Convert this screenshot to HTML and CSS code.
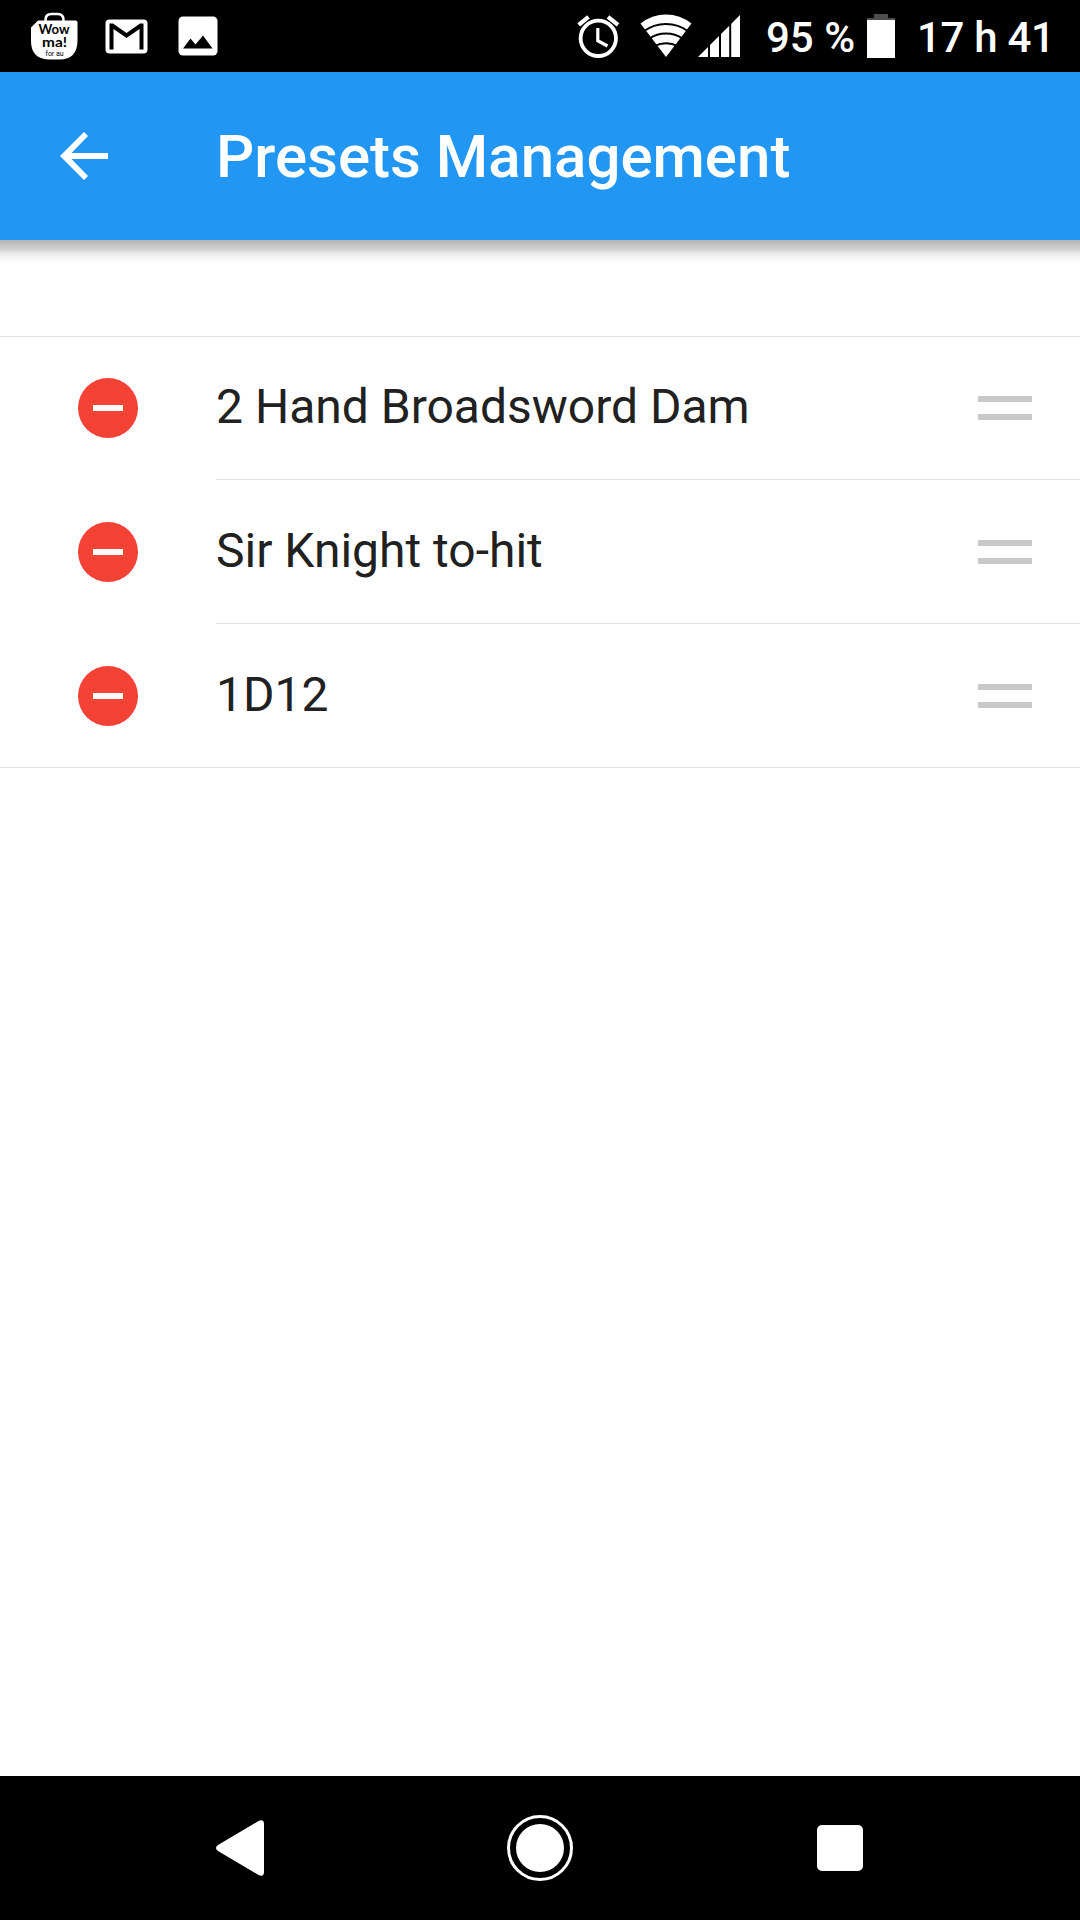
FILE: index.html
```html
<!DOCTYPE html>
<html lang="en">
<head>
<meta charset="utf-8">
<title>Presets Management</title>
<link rel="stylesheet" href="styles.css">
</head>
<body>
<div class="screen">
  <div class="status-bar">
    <div class="notifications">
      <svg class="icon-shop" width="48" height="48" viewBox="30 12 48 48">
        <path d="M45.500 22v-2q0-6 6-6h6q6 0 6 6v2" fill="none" stroke="#fff" stroke-width="2.500"/>
        <path d="M38 20.500H75.500q2 0 2 2V40q0 19.500-18 19.500H50Q31 59.500 31 41V27.500Z" fill="#fff"/>
        <text class="shop-name" x="38.500" y="34" textLength="31" lengthAdjust="spacingAndGlyphs">Wow</text>
        <text class="shop-name" x="42" y="47" textLength="25" lengthAdjust="spacingAndGlyphs">ma!</text>
        <text class="shop-sub" x="45.500" y="55.500" textLength="18">for au</text>
      </svg>
      <svg width="43" height="35" viewBox="0 0 43 35">
        <rect x=".5" y=".5" width="42" height="34" rx="4" fill="#fff"/>
        <path d="M4.500 30.500V4.500H8L21.500 14 35 4.500H38.500V30.500H34.500V10L21.500 19 8.500 10V30.500Z" fill="#000"/>
      </svg>
      <svg width="40" height="40" viewBox="0 0 40 40">
        <rect x=".5" y=".5" width="39" height="39" rx="4.500" fill="#fff"/>
        <path d="M5 32.500 12.500 22.500 17.500 28.500 25 19.500 34.500 32.500Z" fill="#000"/>
      </svg>
    </div>
    <div class="indicators">
      <svg class="icon-alarm" width="44" height="46" viewBox="576 13 44 46">
        <g fill="none" stroke="#fff">
          <circle cx="598.300" cy="38.300" r="17.700" stroke-width="3.800"/>
          <path d="M597.800 28V40.700L607.500 46" stroke-width="3.200"/>
          <path d="M578.700 24.800 588.500 16.800M608 16.800 618 24.800" stroke-width="4.200"/>
        </g>
      </svg>
      <svg class="icon-wifi" width="52" height="44" viewBox="640.500 13 52 44">
        <path d="M666.500 57 641 23.500Q652.500 14.500 666.500 14.500T692 23.500Z" fill="#fff"/>
        <g fill="none" stroke="#000" stroke-width="2">
          <path d="M644 31.500Q654 24 666.500 24T689 31.500"/>
          <path d="M650 38.500Q657 33.500 666.500 33.500T683 38.500"/>
          <path d="M655 46Q660 43.200 666.500 43.200T678 46"/>
        </g>
      </svg>
      <svg class="icon-signal" width="42" height="42" viewBox="698 15 42 42">
        <path d="M698 57 740 15V57Z" fill="#fff"/>
        <path d="M709 15V57M720 15V57M730.200 15V57" stroke="#000" stroke-width="2"/>
      </svg>
      <span class="battery-level">95 %</span>
      <svg class="icon-battery" width="28" height="44" viewBox="0 0 28 44">
        <path d="M7 0H21V4H28V6H0V4H7Z" fill="#4d4d4d"/>
        <path d="M0 6H28V44H0Z" fill="#fff"/>
      </svg>
      <span class="clock">17 h 41</span>
    </div>
  </div>

  <header class="app-bar">
    <svg class="back" width="48" height="48" viewBox="0 0 48 48">
      <path d="M48 21H11.500L28 4 24 0 0 24 24 48 28 44 11.500 27H48Z" fill="#fff"/>
    </svg>
    <h1 class="title">Presets Management</h1>
  </header>

  <main class="content">
    <ul class="presets">
      <li class="preset">
        <span class="remove"></span>
        <div class="preset-body"><span class="name">2 Hand Broadsword Dam</span><span class="handle"></span></div>
      </li>
      <li class="preset">
        <span class="remove"></span>
        <div class="preset-body"><span class="name">Sir Knight to-hit</span><span class="handle"></span></div>
      </li>
      <li class="preset">
        <span class="remove"></span>
        <div class="preset-body"><span class="name">1D12</span><span class="handle"></span></div>
      </li>
    </ul>
  </main>

  <nav class="nav-bar">
    <svg width="48" height="56" viewBox="0 0 48 56">
      <path d="M2 25 43 .8Q48-1 48 4V52Q48 57 43 55.200L2 31Q-2 28 2 25Z" fill="#fff"/>
    </svg>
    <svg width="66" height="66" viewBox="0 0 66 66">
      <circle cx="33" cy="33" r="31.500" fill="none" stroke="#fff" stroke-width="3"/>
      <circle cx="33" cy="33" r="24" fill="#fff"/>
    </svg>
    <span class="recents"></span>
  </nav>
</div>
</body>
</html>
```
FILE: styles.css
```css
* {
  box-sizing: border-box;
}

body {
  margin: 0;
  font-family: Roboto, sans-serif;
}

svg {
  display: block;
  flex: none;
}

.screen {
  display: flex;
  flex-direction: column;
  width: 1080px;
  height: 1920px;
  overflow: hidden;
  background: #fff;
}

.status-bar {
  display: flex;
  justify-content: space-between;
  align-items: center;
  height: 72px;
  padding: 0 28px 0 30px;
  background: #000;
  color: #fff;
}

.notifications {
  display: flex;
  align-items: center;
  gap: 26.5px;
}

.notifications svg:last-child {
  margin-left: 4px;
}

.shop-name {
  font-family: Lato, sans-serif;
  font-size: 14px;
  font-weight: 700;
}

.shop-sub {
  font-family: Roboto, sans-serif;
  font-size: 7px;
}

.indicators {
  display: flex;
  align-items: center;
  font-size: 42px;
  font-weight: 500;
  line-height: 48px;
  white-space: nowrap;
}

.icon-wifi {
  margin: 0 5.5px 2px 20px;
}

.battery-level {
  width: 101px;
  margin: 4px 0 0 26.5px;
}

.clock {
  width: 135px;
  margin: 4px 0 0 22px;
  letter-spacing: -0.3px;
}

.app-bar {
  display: flex;
  align-items: center;
  height: 168px;
  padding-left: 60px;
  background: #2196f3;
  color: #fff;
}

.title {
  margin: 2px 0 0 108px;
  font-size: 60px;
  font-weight: 500;
  line-height: 70px;
}

.content {
  flex: 1;
  padding-top: 96px;
  background: linear-gradient(#b3b3b3 0, #d0d0d0 9px, #ececec 14px, #fafafa 20px, #fff 26px) no-repeat top / 100% 26px;
}

.presets {
  margin: 0;
  padding: 0;
  list-style: none;
  box-shadow: inset 0 1px #e0e0e0, inset 0 -1px #e0e0e0;
}

.preset {
  display: flex;
  align-items: center;
  height: 144px;
  padding-left: 78px;
}

.remove {
  display: flex;
  align-items: center;
  justify-content: center;
  width: 60px;
  height: 60px;
  margin-right: 78px;
  border-radius: 50%;
  background: #f44336;
}

.remove::before {
  content: "";
  width: 30px;
  height: 6px;
  background: #fff;
}

.preset-body {
  display: flex;
  flex: 1;
  align-items: center;
  justify-content: space-between;
  height: 144px;
  padding-right: 48px;
  box-shadow: inset 0 -1px #e0e0e0;
}

.name {
  color: #212121;
  font-size: 48px;
  line-height: 56px;
  padding-bottom: 2px;
}

.handle {
  width: 54px;
  height: 24px;
  border: solid #c7c7cc;
  border-width: 6px 0;
}

.nav-bar {
  display: flex;
  align-items: center;
  height: 144px;
  padding-left: 216px;
  background: #000;
}

.nav-bar svg + svg {
  margin: 0 244px 0 243px;
}

.recents {
  width: 46px;
  height: 46px;
  border-radius: 5px;
  background: #fff;
}
```
